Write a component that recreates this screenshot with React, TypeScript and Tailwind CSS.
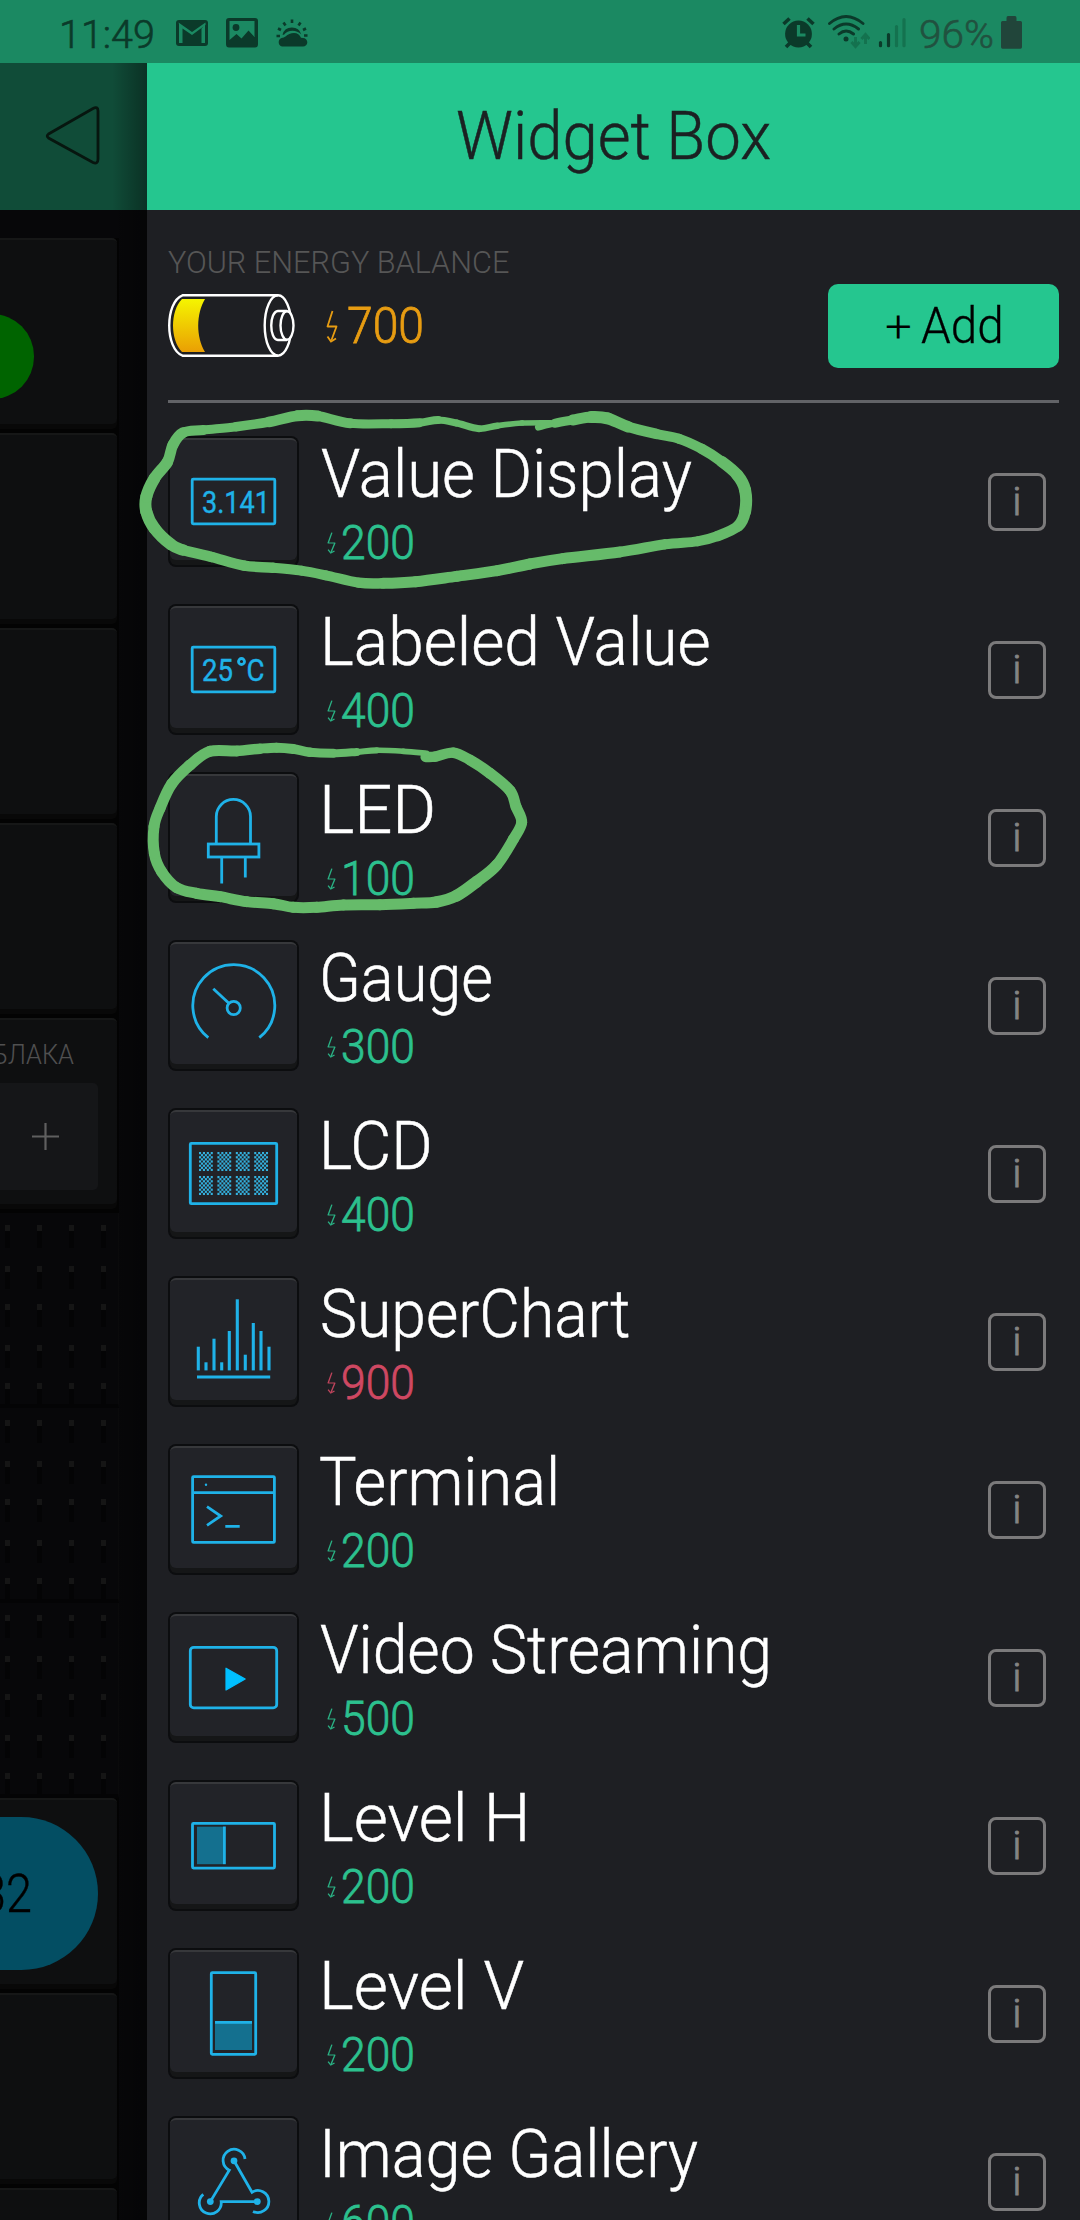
import { useLayoutEffect, useRef, useState, type ReactNode } from "react";

/* Text condensed or stretched horizontally to an exact width. */
function Fit({ width, className = "", children }: { width: number; className?: string; children: ReactNode }) {
  const ref = useRef<HTMLSpanElement>(null);
  const [scale, setScale] = useState(1);
  useLayoutEffect(() => {
    if (ref.current) setScale(width / ref.current.offsetWidth);
  }, [width]);
  return (
    <span className={"block leading-none whitespace-nowrap " + className} style={{ width }}>
      <span ref={ref} className="inline-block origin-left leading-none" style={{ transform: `scaleX(${scale})` }}>
        {children}
      </span>
    </span>
  );
}

function Bolt({ className }: { className: string }) {
  return (
    <svg viewBox="0 0 12 33" preserveAspectRatio="none" className={className} fill="none" stroke="currentColor" strokeWidth="1.8">
      <path d="M6.5 1 1.5 16.5H10.5L5.5 30" strokeLinejoin="round" />
      <path d="M1.5 26.5 5 31.5 10 28.5" />
    </svg>
  );
}

const ICON_TEXT = "font-['Roboto',sans-serif] font-normal";

const lcdCells = [0, 1, 2, 3].flatMap((c) => [0, 1].map((r) => ({ x: 31 + c * 18.4, y: 44 + r * 24 })));
const chartBars = [
  [30.3, 70.7], [38, 86.3], [46, 62.7], [53.7, 86.3], [61.3, 55],
  [69.3, 23.3], [77.3, 78.7], [85.3, 47], [93, 55], [101, 70.7],
];

const icons: Record<string, ReactNode> = {
  value: (
    <>
      <rect x="24.2" y="43.2" width="82.6" height="44.6" rx="1" />
      <text x="34" y="76.5" fontSize="32" textLength="68" lengthAdjust="spacingAndGlyphs" fill="#1fb2e8" strokeWidth="0.4" className={ICON_TEXT}>3.141</text>
    </>
  ),
  labeled: (
    <>
      <rect x="24.2" y="43.2" width="82.6" height="44.6" rx="1" />
      <text x="34" y="76.5" fontSize="32" textLength="31" lengthAdjust="spacingAndGlyphs" fill="#1fb2e8" strokeWidth="0.4" className={ICON_TEXT}>25</text>
      <circle cx="73.5" cy="57.5" r="3" />
      <text x="78.5" y="76.5" fontSize="32" textLength="18" lengthAdjust="spacingAndGlyphs" fill="#1fb2e8" strokeWidth="0.4" className={ICON_TEXT}>C</text>
    </>
  ),
  led: (
    <>
      <path d="M48.3 71V44.5a17 17 0 0 1 34.2 0V71" />
      <rect x="40.3" y="72" width="50.6" height="13" />
      <path d="M53.7 86v25.5M77.3 86v19.5" />
    </>
  ),
  gauge: (
    <>
      <path d="M40.3 97.7A41 41 0 1 1 91.3 97.7" />
      <circle cx="65.7" cy="68" r="6.6" />
      <path d="M45.3 48.7 60.9 63.3" />
    </>
  ),
  lcd: (
    <>
      <rect x="22.3" y="35.3" width="86.4" height="60.4" rx="1" />
      {lcdCells.map((cell) => (
        <g key={`${cell.x}-${cell.y}`} fill="#34b1de" stroke="none">
          {Array.from({ length: 63 }, (_, i) => i).filter((i) => i % 2 === 0).map((i) => (
            <rect key={i} x={cell.x + (i % 7) * 1.95} y={cell.y + Math.floor(i / 7) * 2.1} width="2.1" height="2.2" />
          ))}
        </g>
      ))}
    </>
  ),
  chart: (
    <>
      {chartBars.map(([x, y]) => <path key={x} d={`M${x} ${y}V94.4`} strokeWidth="3.1" />)}
      <path d="M29 101H102.2" />
    </>
  ),
  terminal: (
    <>
      <rect x="24.6" y="32.6" width="81.8" height="65.8" rx="1" />
      <path d="M24.6 48.7H106.4" />
      <path d="M39 62.7 52.7 72 39 81.3M57.3 82.4H71.7" />
      <circle cx="38" cy="40.7" r="1.2" fill="#1fb2e8" stroke="none" />
    </>
  ),
  video: (
    <>
      <rect x="22.3" y="35.3" width="86.4" height="60.6" rx="3.5" />
      <path d="M58 56.2V78L77.2 67Z" fill="#00bfff" stroke="#00bfff" strokeWidth="1.2" strokeLinejoin="round" />
    </>
  ),
  levelH: (
    <>
      <rect x="24.5" y="43.3" width="82" height="44.8" rx="1" />
      <rect x="29" y="46.7" width="26" height="37.5" fill="#14708f" stroke="none" />
      <path d="M56.4 46.5V84.2" />
    </>
  ),
  levelV: (
    <>
      <rect x="43.3" y="24.7" width="44.4" height="81.6" rx="1" />
      <rect x="47" y="75" width="37" height="27" fill="#14708f" stroke="none" />
      <path d="M47 74.4H84" />
    </>
  ),
  gallery: (
    <>
      <path d="M77 43A11 11 0 1 0 61.3 54.2L42.3 85.6" />
      <path d="M66 44.8 84 76.2A11 11 0 1 1 85 95.4" />
      <path d="M89.3 85.6H53.2A11 11 0 1 1 35.3 78.3" />
      <g fill="#1fb2e8" stroke="none">
        <circle cx="66" cy="44.8" r="3.4" />
        <circle cx="42.3" cy="85.6" r="3.4" />
        <circle cx="89.3" cy="85.6" r="3.4" />
      </g>
    </>
  ),
};

const widgets = [
  { name: "Value Display", cost: 200, icon: "value", width: 371, x: 321 },
  { name: "Labeled Value", cost: 400, icon: "labeled", width: 391, x: 320 },
  { name: "LED", cost: 100, icon: "led", width: 117, x: 319 },
  { name: "Gauge", cost: 300, icon: "gauge", width: 174, x: 319 },
  { name: "LCD", cost: 400, icon: "lcd", width: 114, x: 319 },
  { name: "SuperChart", cost: 900, icon: "chart", width: 310, x: 320 },
  { name: "Terminal", cost: 200, icon: "terminal", width: 241, x: 319 },
  { name: "Video Streaming", cost: 500, icon: "video", width: 452, x: 320 },
  { name: "Level H", cost: 200, icon: "levelH", width: 211, x: 319 },
  { name: "Level V", cost: 200, icon: "levelV", width: 205, x: 319 },
  { name: "Image Gallery", cost: 600, icon: "gallery", width: 379, x: 319 },
];

function Row({ w }: { w: (typeof widgets)[number] }) {
  return (
    <li className="flex h-[168px] shrink-0 items-start">
      <div className="h-[131px] w-[131px] shrink-0 rounded-[8px] bg-[#0c0d0f] p-[2px]">
        <div className="h-[127px] rounded-[6px] bg-[#151617] pb-[5px]">
          <div className="h-[122px] rounded-[6px] border-t-2 border-[#37383b] bg-[#222328]">
            <svg viewBox="2 4 127 120" className="h-[120px] w-[127px]" fill="none" stroke="#1fb2e8" strokeWidth="2.8">
              {icons[w.icon]}
            </svg>
          </div>
        </div>
      </div>
      <div className="flex-1 pt-[4px]">
        <div style={{ paddingLeft: w.x - 299 }}>
          <Fit width={w.width} className="h-[68px] text-[67.5px] font-light text-white [-webkit-text-stroke:0.5px]">{w.name}</Fit>
        </div>
        <div className={"mt-[11px] flex pl-[28px] " + (w.cost > 700 ? "text-[#cf4862]" : "text-[#2cc08e]")}>
          <Bolt className="mt-[13px] h-[22px] w-[9px] opacity-90" />
          <Fit width={74} className="ml-[5px] text-[48px] font-light [-webkit-text-stroke:0.8px]">{w.cost}</Fit>
        </div>
      </div>
      <div className="mt-[37px] mr-[34px] flex h-[58px] w-[58px] flex-col items-center rounded-[8px] border-[3px] border-[#7b7a7b] pt-[11px]">
        <span className="-mt-[4px] text-[39px] leading-none font-light text-[#858485] [-webkit-text-stroke:1px]">i</span>
      </div>
    </li>
  );
}

function StatusBar() {
  return (
    <div className="flex h-[63px] shrink-0 items-start bg-[#1b8962] text-[#0b3a2a]">
      <Fit width={96} className="mt-[15px] ml-[59px] text-[39.5px] font-light [-webkit-text-stroke:0.6px]">11:49</Fit>
      <svg viewBox="0 0 32 26" className="mt-[20px] ml-[21px] h-[26px] w-[32px]">
        <rect width="32" height="26" rx="3" fill="currentColor" />
        <path d="M2.500 2.500 16 12 29.500 2.500V5L16 15 6.500 8.500V23H3V4Z M25.500 8.500 29 5V23H25.500Z" fill="#1b8962" />
      </svg>
      <svg viewBox="0 0 32 30" className="mt-[18px] ml-[18px] h-[30px] w-[32px]">
        <path fillRule="evenodd" d="M3 0H29Q32 0 32 3V26Q32 29.500 29 29.500H3Q0 29.500 0 26V3Q0 0 3 0ZM3.500 3V22L10.500 16 15.500 20.500 22.500 12.500 28.500 19V3Z" fill="currentColor" />
        <circle cx="10" cy="9.500" r="3.400" fill="currentColor" />
      </svg>
      <svg viewBox="0 0 32 28" className="mt-[19px] ml-[18px] h-[28px] w-[32px]" fill="currentColor">
        <path d="M6 27.500a4.500 4.500 0 0 1-.5-8.500Q8 18.500 9.500 17.500 13 14 18 14T25 18.800L27 18.900a4.300 4.300 0 0 1 0 8.600Z" />
        <path d="M6.500 15.800a9.800 9.800 0 0 1 18.800-.3Q21.500 11.800 16.500 11.800 11 11.800 8 15.800Z" />
        <path d="M16 0.500V4M7.500 3.500 9.500 6.500M24.500 3.500 22.500 6.500M2 9.500 5 11M30 9.500 27 11M0.500 17H4M28 16.500H31.500" stroke="currentColor" strokeWidth="2.600" />
      </svg>

      <svg viewBox="0 0 33 32" className="mt-[17px] ml-[474px] h-[32px] w-[33px]">
        <circle cx="16.500" cy="17" r="13.400" fill="currentColor" />
        <path d="M1.500 7 7.500 1.500M31.500 7 25.500 1.500M4 30 8 26M29 30 25 26" stroke="currentColor" strokeWidth="3.600" />
        <path d="M16.500 8V18H23.500" fill="none" stroke="#1b8962" strokeWidth="3.200" />
      </svg>
      <svg viewBox="0 0 42 34" className="mt-[15px] ml-[13px] h-[34px] w-[42px]" fill="none" strokeWidth="2.900">
        <path d="M1.500 8.500Q18 -5.500 35 8.500M6 14Q18 4 30.500 14M11 19Q18 13 25.500 19" stroke="currentColor" strokeLinecap="round" />
        <circle cx="18" cy="24" r="2.500" fill="currentColor" />
        <path d="M27.500 22V31M23.500 27 27.500 31.500 31.500 27M37.500 29V19.500M33.500 24 37.500 19.500 41.500 24" stroke="#14724f" />
      </svg>
      <svg viewBox="0 0 28 32" className="mt-[17px] ml-[8px] h-[32px] w-[28px]" strokeWidth="3.200" strokeLinecap="round">
        <path d="M2.500 25.500V28.700M10.500 17.500V28.700" stroke="currentColor" />
        <path d="M18.500 9.500V28.700M26 2.500V28.700" stroke="#14724f" />
      </svg>
      <Fit width={75} className="mt-[15px] ml-[13px] text-[39.500px] font-light text-[#21513f] [-webkit-text-stroke:0.6px]">96%</Fit>
      <svg viewBox="0 0 21 33" className="mt-[16px] ml-[7px] h-[33px] w-[21px]" fill="#21453a">
        <path d="M7 0H14Q15.500 0 15.500 2V5H19.500Q21 5 21 6.500V31Q21 32.700 19.500 32.700H1.500Q0 32.700 0 31V6.500Q0 5 1.500 5H5.500V2Q5.500 0 7 0Z" />
      </svg>
    </div>
  );
}

function Card({ children }: { children?: ReactNode }) {
  return (
    <div className="h-[195px] w-[119px] shrink-0 bg-[#030303] pr-[2px]">
      <div className="h-[191px] rounded-r-[5px] bg-[#080808] pb-[5px]">
        <div className="h-[186px] overflow-hidden rounded-r-[5px] border-t-2 border-[#161717] bg-[#0e0f10]">{children}</div>
      </div>
    </div>
  );
}

const dotGaps = ["h-[41px]", "h-[38px]", "h-[41px]", "h-[38px]", "h-[25px]"];

function DotTile() {
  return (
    <div className="h-[195px] w-[119px] shrink-0 overflow-hidden border-r border-b-4 border-r-[#0b0b0c] border-b-[#040405] pt-[12px]">
      {dotGaps.map((gap, i) => (
        <div key={i} className={"flex gap-[27px] pl-[5px] " + gap}>
          {[0, 1, 2, 3].map((n) => (
            <div key={n} className="w-[5px]">
              <div className="h-[6px] bg-[#151515]" />
              <div className="h-[17px] bg-[#040405]" />
            </div>
          ))}
        </div>
      ))}
    </div>
  );
}

function Backdrop() {
  return (
    <div className="flex w-[147px] shrink-0 flex-col overflow-hidden bg-[#070709]">
      <div className="h-[147px] shrink-0 bg-[#104c38]">
        <svg viewBox="0 0 147 147" className="h-[147px] w-[147px]" fill="none" stroke="#07160f" strokeWidth="2.800">
          <path d="M48.500 71 93 45.500Q98 43 98 48V96Q98 101.500 93 99.500L48.500 75Q46 73 48.500 71Z" />
        </svg>
      </div>
      <div className="mt-[28px] flex flex-col">
        <Card>
          <div className="mt-[74px] -ml-[50px] h-[85px] w-[84px] rounded-full bg-[#006400]" />
        </Card>
        <Card />
        <Card />
        <Card />
        <Card>
          <div className="flex justify-end pt-[21px] pr-[43px]">
            <Fit width={82} className="text-[28.500px] font-light text-[#505050]">БЛАКА</Fit>
          </div>
          <div className="mt-[13px] flex h-[107px] w-[98px] items-center rounded-r-[5px] bg-[#151618] pl-[32px]">
            <svg viewBox="0 0 27 27" className="h-[27px] w-[27px]" stroke="#5f5f5f" strokeWidth="2.200">
              <path d="M13.500 0V27M0 13.500H27" />
            </svg>
          </div>
        </Card>
        <DotTile />
        <DotTile />
        <DotTile />
        <Card>
          <div className="mt-[17px] -ml-[150px] flex h-[153px] w-[248px] items-center justify-end rounded-full bg-[#034e63] pr-[66px]">
            <Fit width={52} className="text-[54px] font-light text-black [-webkit-text-stroke:0.4px]">32</Fit>
          </div>
        </Card>
        <Card />
        <Card />
      </div>
    </div>
  );
}

/* Hand-drawn marker strokes: x, y, pen width. */
type Pt = [number, number, number];
const markValue: Pt[] = (
  [
    [1000, 82, 5], [1040, 70, 8], [1085, 60, 10], [1130, 51, 12], [1170, 55, 12], [1220, 80, 11], [1290, 102, 10], [1345, 116, 10],
    [1400, 146, 10], [1450, 185, 11], [1488, 225, 12], [1507, 270, 12], [1507, 335, 12], [1490, 378, 11], [1440, 408, 10],
    [1390, 424, 10], [1310, 433, 10], [1200, 456, 11], [1060, 476, 11], [980, 492, 11], [900, 512, 11], [800, 529, 11],
    [700, 545, 11], [620, 550, 11], [560, 548, 10], [480, 526, 10], [420, 512, 10], [350, 503, 10], [280, 497, 11], [200, 471, 10],
    [130, 450, 11], [100, 433, 12], [60, 385, 12], [40, 335, 12], [40, 290, 12], [60, 235, 12], [92, 185, 11], [105, 135, 11],
    [130, 98, 11], [180, 90, 9], [260, 80, 9], [340, 66, 10], [410, 47, 11], [460, 48, 11], [540, 70, 9], [640, 71, 9],
    [710, 68, 9], [755, 60, 7], [800, 69, 7], [855, 86, 7], [900, 77, 6], [960, 69, 5.5], [1030, 68, 5.5],
  ] as Pt[]
).map(([x, y, w]) => [130 + x / 2.45, 400 + y / 3, w]);
const markLed: Pt[] = (
  [
    [887, 81, 10], [915, 80, 11], [970, 68, 10], [1020, 90, 11], [1080, 130, 11], [1140, 182, 11], [1158, 230, 11], [1175, 277, 11],
    [1150, 328, 11], [1100, 405, 11], [1040, 455, 12], [980, 497, 12], [920, 516, 11], [850, 520, 11], [750, 524, 11], [640, 525, 11],
    [560, 532, 11], [490, 532, 11], [430, 521, 11], [350, 515, 11], [270, 500, 11], [200, 490, 11], [140, 473, 11], [95, 425, 11],
    [73, 370, 11], [72, 290, 11], [90, 235, 11], [125, 162, 11], [180, 105, 11], [240, 64, 11], [320, 63, 11], [390, 56, 10],
    [440, 53, 10], [490, 57, 10], [540, 67, 9], [610, 70, 9], [680, 66, 7], [740, 61, 5.5], [820, 64, 5.5], [890, 70, 6],
  ] as Pt[]
).map(([x, y, w]) => [130 + x / 3, 730 + y / 3, w]);

function Marker({ pts }: { pts: Pt[] }) {
  return (
    <g stroke="#66bb6a" fill="none" strokeLinecap="round">
      {pts.slice(0, -1).map((p, i) => {
        const a = pts[Math.max(0, i - 1)];
        const q = pts[i + 1];
        const b = pts[Math.min(pts.length - 1, i + 2)];
        return (
          <path
            key={i}
            strokeWidth={(p[2] + q[2]) / 2}
            d={`M${p[0]} ${p[1]}C${p[0] + (q[0] - a[0]) / 6} ${p[1] + (q[1] - a[1]) / 6} ${q[0] - (b[0] - p[0]) / 6} ${q[1] - (b[1] - p[1]) / 6} ${q[0]} ${q[1]}`}
          />
        );
      })}
    </g>
  );
}

function BatteryGauge() {
  return (
    <svg viewBox="0 0 127 63" className="h-[63px] w-[127px]" fill="none" stroke="#fff" strokeWidth="2.400">
      <defs>
        <linearGradient id="charge" x1="0" y1="0" x2="0" y2="1">
          <stop offset="0" stopColor="#f5f500" />
          <stop offset="1" stopColor="#ea9f04" />
        </linearGradient>
      </defs>
      <path d="M14 5H37C28 20 28 43 37 58H14C2 46 2 17 14 5Z" fill="url(#charge)" stroke="none" />
      <path d="M110 1.300H14.500C-3.200 8 -3.200 55 14.500 61.700H110" />
      <ellipse cx="110" cy="31.500" rx="13.300" ry="30.200" />
      <path d="M119 17H110C101 18 101 45 110 46H119" />
      <ellipse cx="119" cy="31.500" rx="6.500" ry="14.300" fill="#1e1f23" />
    </svg>
  );
}

export default function App() {
  return (
    <div className="relative flex h-[2220px] w-[1080px] flex-col overflow-hidden bg-[#1e1f23] font-['Roboto',sans-serif]">
      <StatusBar />
      <div className="flex h-[2157px] shrink-0">
        <Backdrop />
        <div className="relative z-10 flex w-[933px] flex-col overflow-hidden bg-[#1e1f23]">
          <header className="flex h-[147px] shrink-0 justify-center bg-[#25c68f] pt-[39px]">
            <Fit width={315} className="text-[67.500px] font-light text-[#1b2122] [-webkit-text-stroke:0.5px]">Widget Box</Fit>
          </header>
          <section className="mx-[21px] flex h-[193px] shrink-0 flex-col border-b-[3px] border-[#626367]">
            <Fit width={341} className="mt-[36px] h-[32px] text-[32px] font-light text-[#565656]">YOUR ENERGY BALANCE</Fit>
            <div className="flex items-start">
              <div className="mt-[16px]"><BatteryGauge /></div>
              <Bolt className="mt-[32px] ml-[31px] h-[33px] w-[12px] text-[#e79c12]" />
              <Fit width={77} className="mt-[23px] ml-[9px] text-[50.500px] font-light text-[#e79c12] [-webkit-text-stroke:0.8px]">700</Fit>
              <button className="mt-[6px] ml-auto flex h-[84px] w-[231px] rounded-[10px] bg-[#25c68f] pt-[17px] pl-[56px] text-black">
                <Fit width={27} className="mt-[4px] text-[44px] font-light">+</Fit>
                <Fit width={83} className="ml-[10px] text-[50.500px] font-light [-webkit-text-stroke:0.3px]">Add</Fit>
              </button>
            </div>
          </section>
          <ul className="mt-[33px] ml-[21px] flex flex-col">
            {widgets.map((w) => (
              <Row key={w.name} w={w} />
            ))}
          </ul>
        </div>
      </div>
      <div className="absolute top-[63px] left-[112px] h-[2157px] w-[35px] bg-linear-to-r from-transparent to-black/35" />
      <svg viewBox="0 0 1080 2220" className="pointer-events-none absolute inset-0 z-20 h-[2220px] w-[1080px]">
        <Marker pts={markValue} />
        <Marker pts={markLed} />
      </svg>
    </div>
  );
}
